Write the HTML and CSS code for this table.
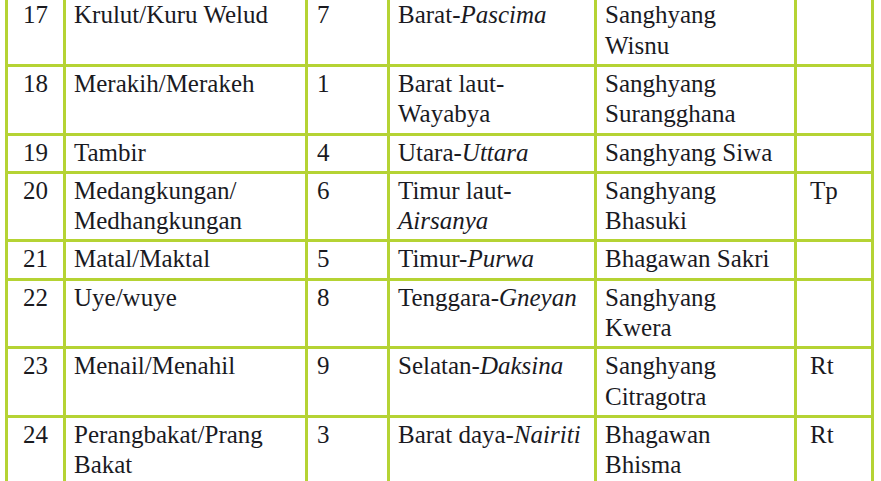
FILE: index.html
```html
<!DOCTYPE html>
<html lang="id">
<head>
<meta charset="utf-8">
<title>Tabel</title>
<link rel="stylesheet" href="styles.css">
</head>
<body>
<div class="grid">
  <div class="c num">17</div><div class="c">Krulut/Kuru Welud</div><div class="c n">7</div><div class="c">Barat-<i>Pascima</i></div><div class="c">Sanghyang<br>Wisnu</div><div class="c last"></div>
  <div class="c num">18</div><div class="c">Merakih/Merakeh</div><div class="c n">1</div><div class="c">Barat laut-<br>Wayabya</div><div class="c">Sanghyang<br>Surangghana</div><div class="c last"></div>
  <div class="c num">19</div><div class="c">Tambir</div><div class="c n">4</div><div class="c">Utara-<i>Uttara</i></div><div class="c">Sanghyang Siwa</div><div class="c last"></div>
  <div class="c num">20</div><div class="c">Medangkungan/<br>Medhangkungan</div><div class="c n">6</div><div class="c">Timur laut-<br><i>Airsanya</i></div><div class="c">Sanghyang<br>Bhasuki</div><div class="c last">Tp</div>
  <div class="c num">21</div><div class="c">Matal/Maktal</div><div class="c n">5</div><div class="c">Timur-<i>Purwa</i></div><div class="c">Bhagawan Sakri</div><div class="c last"></div>
  <div class="c num">22</div><div class="c">Uye/wuye</div><div class="c n">8</div><div class="c">Tenggara-<i>Gneyan</i></div><div class="c">Sanghyang<br>Kwera</div><div class="c last"></div>
  <div class="c num">23</div><div class="c">Menail/Menahil</div><div class="c n">9</div><div class="c">Selatan-<i>Daksina</i></div><div class="c">Sanghyang<br>Citragotra</div><div class="c last">Rt</div>
  <div class="c num">24</div><div class="c">Perangbakat/Prang<br>Bakat</div><div class="c n">3</div><div class="c">Barat daya-<i>Nairiti</i></div><div class="c">Bhagawan<br>Bhisma</div><div class="c last">Rt</div>
</div>
</body>
</html>
```
FILE: styles.css
```css
html, body {
  margin: 0;
  padding: 0;
  background: #ffffff;
  overflow: hidden;
}
body {
  font-family: "Liberation Serif", serif;
  font-size: 25px;
  color: #1a1a1f;
}
.grid {
  display: grid;
  grid-template-columns: 55px 239px 79px 204px 197px 74px;
  gap: 3px;
  padding: 3px;
  background: #b5d334;
  width: max-content;
  margin: -4.6px 0 0 5px;
}
.c {
  background: #ffffff;
  line-height: 30.3px;
  padding: 2px 4px 3px 8px;
  white-space: nowrap;
}
.num {
  text-align: center;
  padding-left: 4px;
  padding-right: 4px;
}
.n {
  padding-left: 9px;
}
.last {
  padding-left: 13px;
}
i {
  font-style: italic;
}
```
